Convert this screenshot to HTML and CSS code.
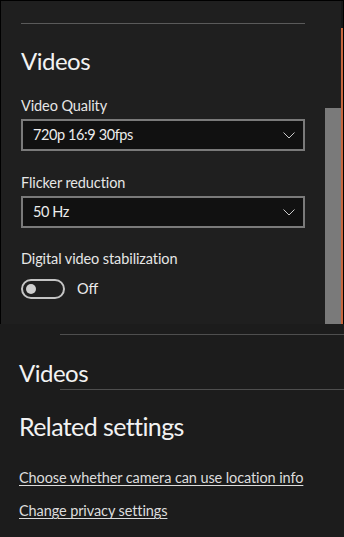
FILE: index.html
```html
<!DOCTYPE html>
<html lang="en">
<head>
<meta charset="utf-8">
<title>Camera settings - Videos</title>
<link rel="stylesheet" href="styles.css">
</head>
<body>
<div class="panel">
  <div class="content">
    <div class="divider"></div>
    <h2 class="heading">Videos</h2>
    <div class="label first">Video Quality</div>
    <div class="select">
      <span>720p 16:9 30fps</span>
      <svg class="chev" width="12" height="7" viewBox="0 0 12 7"><path d="M0.5 0.5 L6 6 L11.5 0.5" fill="none" stroke="#c9c9c9" stroke-width="1"/></svg>
    </div>
    <div class="label second">Flicker reduction</div>
    <div class="select">
      <span>50 Hz</span>
      <svg class="chev" width="12" height="7" viewBox="0 0 12 7"><path d="M0.5 0.5 L6 6 L11.5 0.5" fill="none" stroke="#c9c9c9" stroke-width="1"/></svg>
    </div>
    <div class="label third">Digital video stabilization</div>
    <div class="toggle-row">
      <div class="toggle"><div class="knob"></div></div>
      <span class="toggle-text">Off</span>
    </div>
  </div>
  <div class="track"><div class="thumb"></div></div>
  <div class="edge"></div>
</div>
<div class="lower">
  <div class="rule top"></div>
  <h2 class="heading lower-heading">Videos</h2>
  <div class="rule"></div>
  <h2 class="heading related">Related settings</h2>
  <a class="link first-link" href="#">Choose whether camera can use location info</a>
  <a class="link" href="#">Change privacy settings</a>
</div>
</body>
</html>
```

FILE: styles.css
```css
* { box-sizing: border-box; }
html, body {
  margin: 0;
  padding: 0;
  width: 344px;
  height: 537px;
  background: #1c1c1c;
  font-family: Lato, "Open Sans", sans-serif;
  color: #e8e8e8;
  overflow: hidden;
}
.panel {
  display: flex;
  height: 324px;
  background: #1f1f1f;
  border-top: 1px solid #000;
  border-left: 1px solid #000;
  border-right: 1px solid #000;
}
.content {
  width: 324px;
  padding: 22px 20px 0 20px;
}
.divider {
  height: 1px;
  background: #5a5a5a;
}
.heading {
  margin: 0;
  font-weight: 400;
  font-size: 24px;
  line-height: 32px;
  letter-spacing: -0.5px;
  color: #f2f2f2;
}
.content .heading { margin-top: 21px; }
.label {
  font-size: 14.5px;
  line-height: 20px;
  letter-spacing: -0.1px;
  color: #e6e6e6;
  margin-top: 21px;
}
.label.first { margin-top: 19px; }
.label.second { margin-top: 22px; }
.label.third { margin-top: 21px; }
.select {
  margin-top: 3px;
  height: 32px;
  border: 2px solid #7a7a7a;
  background: #111;
  display: flex;
  align-items: center;
  justify-content: space-between;
  padding: 0 8px 0 10px;
  font-size: 14.5px;
  letter-spacing: -0.4px;
  line-height: 20px;
  color: #ececec;
}
.chev { display: block; margin-top: 1px; }
.toggle-row {
  margin-top: 10px;
  display: flex;
  align-items: center;
}
.toggle {
  width: 44px;
  height: 20px;
  border: 2px solid #c4c4c4;
  border-radius: 10px;
  display: flex;
  align-items: center;
  padding-left: 3px;
}
.knob {
  width: 10px;
  height: 10px;
  border-radius: 50%;
  background: #cfcfcf;
}
.toggle-text {
  margin-left: 12px;
  font-size: 14.5px;
  line-height: 20px;
  color: #ececec;
}
.track {
  width: 16px;
  padding-top: 107px;
  display: flex;
  flex-direction: column;
}
.thumb {
  flex: 1;
  background: #7a7a7a;
}
.edge {
  width: 2px;
  background: linear-gradient(to bottom, #181818 0, #181818 27px, #c8673f 27px);
}
.lower {
  padding: 10px 0 0 19px;
}
.rule {
  height: 1px;
  background: #4e4e4e;
  margin-left: 41px;
}
.lower-heading { margin-top: 22px; }
.related { margin-top: 20px; font-size: 25px; letter-spacing: -0.6px; }
.link {
  display: block;
  width: max-content;
  font-size: 14.5px;
  line-height: 20px;
  letter-spacing: -0.1px;
  color: #dcdcdc;
  text-decoration: underline;
  text-underline-offset: 2px;
  margin-top: 13px;
}
.link.first-link { margin-top: 26px; }
```
